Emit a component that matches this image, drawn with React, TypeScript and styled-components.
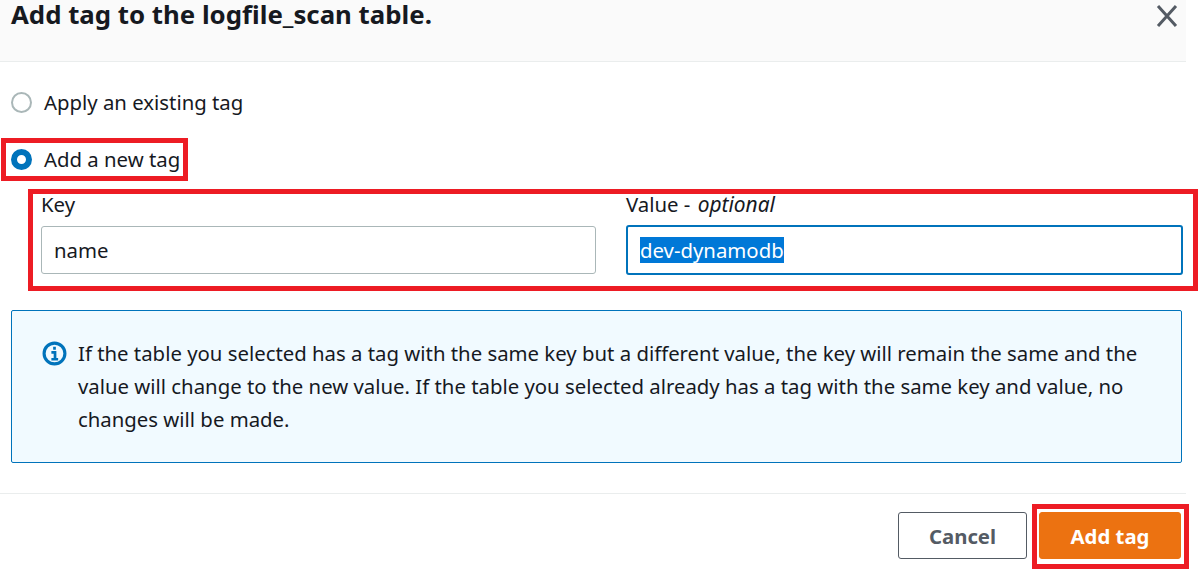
import React from "react";
import styled, { createGlobalStyle } from "styled-components";

const GlobalStyle = createGlobalStyle`
  html, body {
    margin: 0;
    padding: 0;
    background: #ffffff;
  }
  * {
    box-sizing: border-box;
  }
`;

const Page = styled.div`
  position: relative;
  width: 1201px;
  height: 575px;
  overflow: hidden;
  background: #ffffff;
  color: #16191f;
  font-family: "Noto Sans", "Open Sans", sans-serif;
  font-size: 20.35px;
`;

const Header = styled.header`
  display: flex;
  justify-content: space-between;
  width: 1186px;
  height: 62px;
  padding: 0 7px 0 11px;
  background: #fafafa;
  border-bottom: 1px solid #eaeded;
`;

const Title = styled.h1`
  margin: 0;
  font-size: 25.8px;
  line-height: 28px;
  font-weight: 700;
`;

const CloseButton = styled.button`
  display: flex;
  width: 24px;
  height: 24px;
  margin-top: 3px;
  padding: 0;
  border: none;
  background: none;
  color: #545b64;
`;

const Body = styled.div`
  display: flex;
  flex-direction: column;
  padding: 26px 20px 0 11px;
`;

const RadioRow = styled.label<{ $gap: number }>`
  display: flex;
  align-items: center;
  gap: 12px;
  height: 28px;
  margin-bottom: ${(props) => props.$gap}px;
`;

const RadioDot = styled.span<{ $checked?: boolean }>`
  width: 21px;
  height: 21px;
  border-radius: 50%;
  background: #ffffff;
  border: ${(props) => (props.$checked ? "6px solid #0073bb" : "2px solid #aab7b8")};
`;

const Fields = styled.div`
  display: grid;
  grid-template-columns: 555px 557px;
  column-gap: 30px;
  margin-top: 18px;
  padding-left: 30px;
`;

const Field = styled.div`
  display: flex;
  flex-direction: column;
  gap: 9px;
`;

const FieldLabel = styled.label`
  line-height: 26px;

  em {
    margin-left: 2px;
    font-size: 20.9px;
    font-style: italic;
  }
`;

const InputBox = styled.div<{ $focused?: boolean }>`
  display: flex;
  align-items: center;
  height: ${(props) => (props.$focused ? 50 : 48)}px;
  margin-top: ${(props) => (props.$focused ? -1 : 0)}px;
  padding-left: 12px;
  border-radius: 3px;
  border: ${(props) => (props.$focused ? "2px solid #0073bb" : "1px solid #aab7b8")};
`;

const Selected = styled.span`
  background: #0078d7;
  color: #ffffff;
  line-height: 26px;
`;

const InfoBox = styled.div`
  display: flex;
  gap: 12px;
  height: 153px;
  margin-top: 35px;
  padding: 26px 20px 0 30px;
  width: 1171px;
  border: 1px solid #0073bb;
  border-radius: 2px;
  background: #f1faff;
`;

const InfoIcon = styled.svg`
  flex: none;
  width: 25px;
  height: 25px;
  margin-top: 4px;
  color: #0073bb;
`;

const InfoText = styled.p`
  margin: 0;
  margin-left: -1px;
  line-height: 33px;
`;

const Footer = styled.footer`
  display: flex;
  justify-content: flex-end;
  gap: 12px;
  width: 1186px;
  margin-top: 30px;
  padding: 18px 5px 0 0;
  border-top: 1px solid #eaeded;
`;

const Button = styled.button<{ $primary?: boolean }>`
  width: ${(props) => (props.$primary ? 142 : 129)}px;
  height: 47px;
  padding: 0;
  border-radius: 3px;
  font-family: inherit;
  font-size: 20.35px;
  font-weight: 700;
  border: 1px solid ${(props) => (props.$primary ? "#ec7211" : "#545b64")};
  background: ${(props) => (props.$primary ? "#ec7211" : "#ffffff")};
  color: ${(props) => (props.$primary ? "#ffffff" : "#545b64")};
`;

const Callout = styled.div<{ $x: number; $y: number; $w: number; $h: number }>`
  position: absolute;
  left: ${(props) => props.$x}px;
  top: ${(props) => props.$y}px;
  width: ${(props) => props.$w}px;
  height: ${(props) => props.$h}px;
  border: 5px solid #ed1c24;
  pointer-events: none;
`;

const App: React.FC = () => {
  return (
    <Page>
      <GlobalStyle />
      <Header>
        <Title>Add tag to the logfile_scan table.</Title>
        <CloseButton aria-label="Close">
          <svg width="24" height="24" viewBox="0 0 24 24" fill="none" stroke="currentColor" strokeWidth="3">
            <path d="M3 3l18 20M21 3L3 23" />
          </svg>
        </CloseButton>
      </Header>
      <Body>
        <RadioRow $gap={29}>
          <RadioDot />
          Apply an existing tag
        </RadioRow>
        <RadioRow $gap={0}>
          <RadioDot $checked />
          Add a new tag
        </RadioRow>
        <Fields>
          <Field>
            <FieldLabel>Key</FieldLabel>
            <InputBox>name</InputBox>
          </Field>
          <Field>
            <FieldLabel>
              Value - <em>optional</em>
            </FieldLabel>
            <InputBox $focused>
              <Selected>dev-dynamodb</Selected>
            </InputBox>
          </Field>
        </Fields>
        <InfoBox>
          <InfoIcon viewBox="0 0 24 24" fill="none">
            <circle cx="12" cy="12" r="10" stroke="currentColor" strokeWidth="3" />
            <path d="M12 5.5v3M9 11h3.5v6M9 17.5h6.5" stroke="currentColor" strokeWidth="2.6" />
          </InfoIcon>
          <InfoText>
            If the table you selected has a tag with the same key but a different value, the key will remain the same and the value will change to the new value. If the table you selected already has a tag with the same key and value, no changes will be made.
          </InfoText>
        </InfoBox>
      </Body>
      <Footer>
        <Button>Cancel</Button>
        <Button $primary>Add tag</Button>
      </Footer>
      <Callout $x={1} $y={138} $w={187} $h={43} />
      <Callout $x={28} $y={189} $w={1170} $h={102} />
      <Callout $x={1032} $y={504} $w={157} $h={65} />
    </Page>
  );
};

export default App;
